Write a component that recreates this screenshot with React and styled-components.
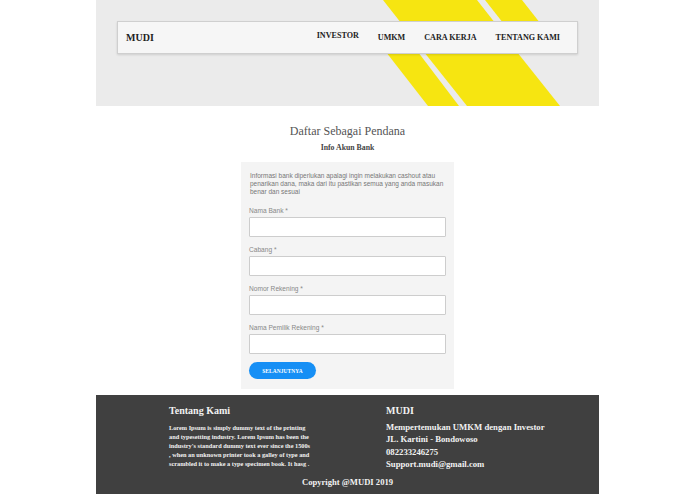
import React from "react";
import styled, { createGlobalStyle } from "styled-components";

const GlobalStyle = createGlobalStyle`
  html, body {
    margin: 0;
    padding: 0;
    background: #ffffff;
  }
  * {
    box-sizing: border-box;
  }
`;

const serif = `"Liberation Serif", "DejaVu Serif", serif`;
const sans = `"Liberation Sans", Arial, sans-serif`;

const Page = styled.div`
  width: 503px;
  margin: 0 auto;
  display: flex;
  flex-direction: column;
`;

const Header = styled.header`
  position: relative;
  height: 106px;
  background: #ebebeb;
  padding-top: 21px;
  overflow: hidden;
`;

const Stripes = styled.svg`
  position: absolute;
  left: 0;
  top: 0;
  width: 503px;
  height: 106px;
`;

const Navbar = styled.nav`
  position: relative;
  margin: 0 21px;
  height: 33px;
  background: #f6f6f6;
  border: 1px solid #cfcfcf;
  box-shadow: 0 1px 2px rgba(0, 0, 0, 0.12);
  display: flex;
  align-items: center;
  justify-content: space-between;
  padding: 0 17px 0 8px;
`;

const Brand = styled.div`
  font-family: ${serif};
  font-weight: bold;
  font-size: 10px;
  color: #1e1e1e;
`;

const Menu = styled.div`
  display: flex;
  gap: 19px;
`;

const MenuItem = styled.a`
  font-family: ${serif};
  font-weight: bold;
  font-size: 8.1px;
  color: #222;
  text-decoration: none;
  margin-top: ${(p) => (p.$up ? "-2px" : "0")};
`;

const Main = styled.main`
  display: flex;
  flex-direction: column;
  align-items: center;
  padding-top: 18px;
  padding-bottom: 6px;
`;

const Title = styled.h1`
  margin: 0;
  font-family: ${serif};
  font-weight: normal;
  font-size: 12px;
  line-height: 14px;
  color: #555;
`;

const SubTitle = styled.h2`
  margin: 4px 0 0;
  font-family: ${serif};
  font-weight: bold;
  font-size: 7.8px;
  line-height: 12px;
  color: #444;
`;

const Card = styled.form`
  margin-top: 8px;
  width: 213px;
  background: #f4f4f4;
  padding: 10px 8px 10px 8px;
  display: flex;
  flex-direction: column;
`;

const Intro = styled.p`
  margin: 0 0 11px 1px;
  font-family: ${sans};
  font-size: 6.5px;
  line-height: 8px;
  color: #777;
  white-space: pre;
`;

const Field = styled.div`
  display: flex;
  flex-direction: column;
  gap: 2px;
  margin-bottom: 9px;
`;

const Label = styled.label`
  font-family: ${sans};
  font-size: 6.6px;
  line-height: 8px;
  color: #888;
`;

const Input = styled.input`
  width: 197px;
  height: 20px;
  background: #fff;
  border: 1px solid #cdcdcd;
  border-radius: 1px;
  outline: none;
`;

const Button = styled.button`
  margin-top: -1px;
  width: 67px;
  height: 17px;
  border: none;
  border-radius: 9px;
  background: #168ff5;
  color: #fff;
  font-family: ${serif};
  font-weight: bold;
  font-size: 5.4px;
  letter-spacing: 0.1px;
  padding: 0;
`;

const Footer = styled.footer`
  height: 99px;
  background: #404040;
  color: #f2f2f2;
  padding: 10px 0 0;
  display: flex;
  flex-direction: column;
`;

const Columns = styled.div`
  display: flex;
  padding-left: 73px;
`;

const LeftCol = styled.div`
  width: 217px;
`;

const RightCol = styled.div`
  flex: 1;
`;

const FootTitle = styled.div`
  font-family: ${serif};
  font-weight: bold;
  font-size: 10px;
  line-height: 12px;
`;

const Lorem = styled.p`
  margin: 6px 0 0;
  font-family: ${serif};
  font-weight: bold;
  font-size: 6.3px;
  line-height: 9px;
  white-space: pre-line;
`;

const InfoLine = styled.div`
  font-family: ${serif};
  font-weight: bold;
  font-size: 8.7px;
  line-height: 12.3px;
  margin-top: ${(p) => (p.$first ? "4px" : "0")};
`;

const Copyright = styled.div`
  margin-top: 6px;
  text-align: center;
  font-family: ${serif};
  font-weight: bold;
  font-size: 8.6px;
  line-height: 12px;
`;

const intro = `Informasi bank diperlukan apalagi ingin melakukan cashout atau
penarikan dana, maka dari itu pastikan semua yang anda masukan
benar dan sesuai`;

const lorem = `Lorem Ipsum is simply dummy text of the printing
and typesetting industry. Lorem Ipsum has been the
industry's standard dummy text ever since the 1500s
, when an unknown printer took a galley of type and
scrambled it to make a type specimen book. It hasg .`;

const fields = ["Nama Bank *", "Cabang *", "Nomor Rekening *", "Nama Pemilik Rekening *"];

export default function App() {
  return (
    <>
      <GlobalStyle />
      <Page>
        <Header>
          <Stripes viewBox="0 0 503 106">
            <polygon points="287,0 381,0 403,28 309,28" fill="#f6e511" />
            <polygon points="389,0 426,0 448,28 411,28" fill="#f6e511" />
            <polygon points="290,52 322,52 363,106 332,106" fill="#f6e511" />
            <polygon points="328,52 421,52 464,106 371,106" fill="#f6e511" />
          </Stripes>
          <Navbar>
            <Brand>MUDI</Brand>
            <Menu>
              <MenuItem $up>INVESTOR</MenuItem>
              <MenuItem>UMKM</MenuItem>
              <MenuItem>CARA KERJA</MenuItem>
              <MenuItem>TENTANG KAMI</MenuItem>
            </Menu>
          </Navbar>
        </Header>

        <Main>
          <Title>Daftar Sebagai Pendana</Title>
          <SubTitle>Info Akun Bank</SubTitle>
          <Card onSubmit={(e) => e.preventDefault()}>
            <Intro>{intro}</Intro>
            {fields.map((f) => (
              <Field key={f}>
                <Label>{f}</Label>
                <Input type="text" />
              </Field>
            ))}
            <Button type="submit">SELANJUTNYA</Button>
          </Card>
        </Main>

        <Footer>
          <Columns>
            <LeftCol>
              <FootTitle>Tentang Kami</FootTitle>
              <Lorem>{lorem}</Lorem>
            </LeftCol>
            <RightCol>
              <FootTitle>MUDI</FootTitle>
              <InfoLine $first>Mempertemukan UMKM dengan Investor</InfoLine>
              <InfoLine>JL. Kartini - Bondowoso</InfoLine>
              <InfoLine>082233246275</InfoLine>
              <InfoLine>Support.mudi@gmail.com</InfoLine>
            </RightCol>
          </Columns>
          <Copyright>Copyright @MUDI 2019</Copyright>
        </Footer>
      </Page>
    </>
  );
}
